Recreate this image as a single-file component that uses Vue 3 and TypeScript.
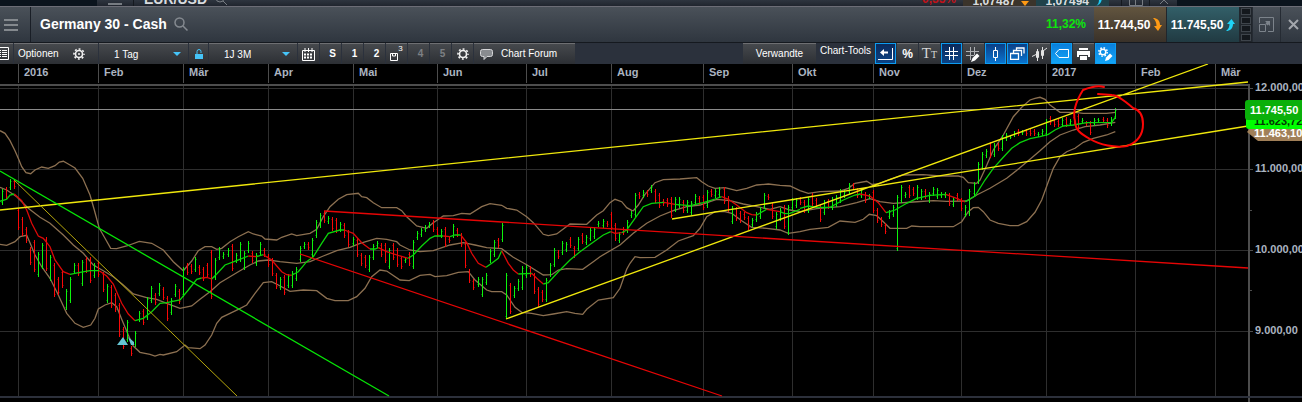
<script setup lang="ts">
import { ref } from 'vue'

/* Chart data is stored per tile: an origin in chart units and values in thirds of a unit. */
interface Tile {
  ox: number
  oy: number
  d: string
}
interface Bar {
  x: number
  top: number
  height: number
  up: boolean
}

const barTiles: Tile[] = [
  { ox: 0, oy: 160, d: 'g7 87 134,r19 82 118,g31 58 90,r43 58 88,r55 145 209,r67 172 228,r79 202 248,r91 262 316,r103 240 336,g115 276 352,g127 249 326,r139 231 332,g151 285 362,r163 310 412,r175 350 405,r187 330 385,g199 387 450,g211 352 430,g223 310 343,r235 308 348,g247 300 377,r259 290 340,r271 292 368,g283 309 355,r295 303 350,r310 335 396,g322 372 430,r334 375 445,r346 398 457,r358 430 532,r370 500 567,g382 481 545,r394 558 587,g406 513 562,g418 453 485,r430 448 495,g442 411 480,g454 378 430,r466 398 435,g478 369 408,r490 382 420,r502 408 483,g514 415 465,g526 373 412,r538 388 432,g550 322 410,r562 310 345,r574 312 342,g586 292 335,r598 315 345,r610 320 363,r622 308 350,r634 270 417' },
  { ox: 200, oy: 180, d: 'g46 235 300,g58 201 240,g70 215 237,g84 205 232,r97 193 272,g109 218 248,g121 187 245,g133 212 269,g145 183 220,r157 213 250,g169 220 258,g181 187 225,r193 205 230,r205 222 262,r217 235 288,r229 278 326,g241 292 329,r253 285 346,g265 283 325,g277 272 325,g289 260 303,g301 199 245,g313 185 207,r325 186 210,g337 175 230,g349 120 175,g361 98 145,r373 93 130,g385 107 132,r397 112 152,r409 115 160,g421 126 155,r433 128 175,r445 150 202,g460 172 198,r472 175 230,r484 218 258,r496 225 263,g508 225 275,g520 192 240,g532 183 205,r544 190 230,r556 190 250,g568 205 267,r580 190 240,r592 205 260' },
  { ox: 400, oy: 180, d: 'r4 228 267,g16 230 248,r28 215 258,g40 180 267,g52 153 180,g64 143 172,g76 135 155,g88 125 145,r100 120 155,r112 140 170,g124 147 175,r136 142 200,r148 170 190,g160 133 175,r172 145 170,r184 158 200,r196 185 265,r208 268 310,r220 298 330,g235 290 320,g247 290 350,g259 278 315,g271 208 248,g283 180 230,r295 173 205,g307 130 187,g319 278 418,r331 308 402,g343 317 355,g355 296 332,g367 258 330,g379 255 295,r391 258 290,r403 280 342,r415 322 380,r427 330 365,g439 295 365,g451 248 292,g463 205 260,r475 210 237,g487 182 225,g499 185 215,r511 170 205,r523 197 233,g535 172 212,r547 160 192,g559 165 195,g571 145 182,g583 140 177,g595 122 142,g610 118 145,r622 122 142,r634 97 150,r646 128 183,g658 155 190,r670 140 165,g682 120 160,g694 92 115' },
  { ox: 600, oy: 150, d: 'g106 128 200,r118 127 147,g130 120 145,r142 120 142,g154 105 128,r166 118 158,r178 130 175,r190 148 168,r202 145 172,r214 140 205,g226 142 185,g238 140 175,r250 150 190,g262 150 190,g274 152 195,g286 132 165,r298 138 165,r310 135 180,g322 120 175,r334 117 140,g346 118 145,g358 112 142,r373 112 162,r385 137 187,g397 167 222,r409 172 213,r421 182 218,r433 185 210,r445 197 240,g457 205 230,g469 187 215,g481 170 208,g493 128 178,r505 132 150,r517 160 207,g529 185 237,g541 175 212,r553 165 238,g565 165 255,g577 145 180,g589 145 175,r601 142 165,r613 150 190,g625 142 190,r637 130 168' },
  { ox: 780, oy: 120, d: 'r109 235 265,r121 253 305,g133 240 285,r145 238 268,g157 230 270,g169 225 260,g181 207 250,g193 210 235,g208 190 222,r220 188 210,r232 205 235,g244 203 235,r256 215 250,g268 222 238,r280 210 280,r292 265 310,r304 290 322,r316 310 342,g328 270 297,g340 255 290,g352 225 392,g364 195 250,g376 215 235,r388 195 235,r400 200 228,g412 195 240,g424 208 240,r436 207 237,g448 215 248,g460 200 228,g472 205 238,g484 215 233,g496 215 235,r508 220 258,g520 232 260,r532 220 242,r544 235 273,g556 255 292,g568 208 288' },
  { ox: 960, oy: 80, d: 'g43 305 348,g55 245 312,g67 217 271,g79 208 233,r91 187 233,g103 190 230,r115 190 214,g127 165 212,g139 158 182,g151 165 178,g163 153 172,r175 148 168,g187 150 165,r199 148 168,r211 148 167,r223 147 167,g235 155 170,g247 148 168,g259 117 167,r271 108 135,r283 118 140,r295 118 140,g307 115 140,r319 112 140,g331 118 138,r343 105 135,r355 103 150,g367 113 132,r379 122 138,r391 122 165,g403 113 138,g415 115 127,r430 110 130,r442 115 145,g454 112 138,g466 84 118' },
]

const bars: Bar[] = barTiles.flatMap((t) =>
  t.d.split(',').map((b) => {
    const [x, hi, lo] = b.slice(1).split(' ').map(Number)
    const top = Math.round(t.oy + hi / 3)
    const bottom = Math.round(t.oy + lo / 3)
    return { x: Math.floor(t.ox + x / 3), top, height: bottom - top, up: b[0] === 'g' }
  }),
)

function openY(b: Bar): number {
  return b.up ? b.top + b.height - 3 : b.top + 2
}
function closeY(b: Bar): number {
  return b.up ? b.top + 2 : b.top + b.height - 3
}

function toPoints(tiles: Tile[]): string {
  return tiles
    .flatMap((t) =>
      t.d.split(' ').map((p) => {
        const [x, y] = p.split(',').map(Number)
        return `${(t.ox + x / 3).toFixed(1)},${(t.oy + y / 3).toFixed(1)}`
      }),
    )
    .join(' ')
}

const bands: string[] = [
  toPoints([
    { ox: 0, oy: 160, d: '0,-88 15,-80 30,-58 45,-28 57,0 65,20 78,38 92,41 105,30 125,21 145,25 165,17 178,6 190,4 205,12 225,24 248,55 270,105 283,150 298,205 315,235 332,265 350,266 380,258 418,244 455,250 490,270 520,305 550,332 575,303 595,272' },
    { ox: 200, oy: 180, d: '15,200 35,200 50,208 65,205 90,185 115,170 145,155 160,162 185,168 195,177 230,180 245,172 275,162 290,167 330,160 350,148 370,110 390,80 415,58 440,44 475,40 485,50 500,53 520,68 545,83 590,83 605,92' },
    { ox: 400, oy: 180, d: '20,110 50,138 80,145 100,128 130,108 160,107 185,100 210,102 245,80 270,71 305,76 320,85 350,90 380,110 400,128 430,163 445,167 470,162 510,132 560,133 590,105 610,92 630,68 645,58 665,65 680,83 695,91' },
    { ox: 600, oy: 150, d: '100,182 115,165 135,133 165,98 190,89 240,87 290,83 305,95 325,108 345,115 375,113 410,122 440,115 470,105 505,102' },
    { ox: 780, oy: 120, d: '0,196 30,198 60,212 85,220 120,215 180,213 205,205 225,190 260,184 275,193 295,192 330,178 370,165 430,164 480,168 535,168 550,172 565,188 590,190 600,180 615,148 640,90 670,45' },
    { ox: 960, oy: 80, d: '160,110 185,82 210,60 225,55 240,52 255,58 270,75 300,97 345,97 370,100 440,100 466,97' },
  ]),
  toPoints([
    { ox: 0, oy: 160, d: '0,82 20,90 50,110 60,120 85,145 120,172 150,190 190,225 220,255 250,280 280,315 310,332 340,350 370,375 400,402 440,413 470,418 500,430 540,445 575,438' },
    { ox: 200, oy: 180, d: '0,358 30,335 60,308 90,290 120,272 150,255 175,243 205,240 240,245 290,250 330,245 370,228 410,212 450,202 480,190 530,175 560,178 590,185' },
    { ox: 400, oy: 180, d: '0,195 30,210 60,215 100,212 150,195 190,188 225,195 260,203 305,206 340,232 380,254 430,285 455,284 475,270 500,266 548,268 580,245' },
    { ox: 600, oy: 150, d: '0,320 60,285 100,250 140,220 180,198 220,182 260,170 300,165 330,155 350,148 390,152 430,162 470,170 510,178' },
    { ox: 780, oy: 120, d: '0,260 30,270 60,275 110,266 180,260 230,248 270,236 300,245 340,250 400,246 460,242 500,244 560,243 590,225 630,205 680,175' },
    { ox: 960, oy: 80, d: '178,265 210,238 240,212 270,185 300,165 340,150 375,140 420,135 466,127' },
  ]),
  toPoints([
    { ox: 0, oy: 160, d: '0,253 20,256 45,245 60,230 80,226 90,248 105,285 125,320 150,355 175,405 200,460 225,490 250,502 272,495 285,475 295,447 315,435 335,428 350,440 365,478 385,525 400,558 420,577 450,583 465,588 480,583 490,585 530,575 555,555 565,563' },
    { ox: 200, oy: 180, d: '0,506 15,495 35,465 50,430 65,412 90,400 115,388 140,375 165,340 190,308 215,305 235,315 270,334 310,330 350,332 380,355 405,362 445,362 470,350 495,325 515,290 540,270 560,273' },
    { ox: 400, oy: 180, d: '0,300 28,302 60,286 90,283 105,290 140,287 175,277 205,275 225,300 260,330 275,335 305,335 320,345 345,382 365,397 395,400 430,407 460,402 500,395 525,400 548,403 560,388 595,360 640,353 660,325' },
    { ox: 600, oy: 150, d: '80,358 90,340 105,320 120,323 165,322 200,300 235,273 280,257 300,235 320,200 345,185 375,185 395,190 425,212 455,232 500,235' },
    { ox: 780, oy: 120, d: '0,330 25,340 60,335 90,328 145,322 180,303 225,307 250,298 268,283 290,287 310,305 330,325 380,325 395,318 420,320 520,320 545,305 565,275 580,263 595,262 610,275 630,300' },
    { ox: 960, oy: 80, d: '115,430 150,437 175,437 200,425 225,397 245,360 265,305 280,265 300,230 320,215 345,205 370,187 400,175 440,165 466,155' },
  ]),
]

function avg(up: boolean, ox: number, oy: number, d: string) {
  return { up, points: toPoints([{ ox, oy, d }]) }
}

const average = [
  avg(true, 0, 160, '0,124 20,118 30,105 43,102'),
  avg(false, 0, 160, '43,102 65,122 80,150 95,190 115,228 130,235 150,260 165,300 190,335 210,343'),
  avg(true, 0, 160, '210,343 240,337 270,332 298,332'),
  avg(false, 0, 160, '298,332 320,348 340,372 365,430 385,462 405,482'),
  avg(true, 0, 160, '405,482 430,475 455,455 480,430 500,428 540,420 565,390 590,358 605,354'),
  avg(false, 0, 160, '605,354 620,352 635,357'),
  avg(true, 200, 180, '35,297 50,282 75,255 110,242 145,228'),
  avg(false, 200, 180, '145,228 170,230'),
  avg(true, 200, 180, '170,230 190,224'),
  avg(false, 200, 180, '190,224 215,240 245,275 260,284 275,286'),
  avg(true, 200, 180, '275,286 295,275 320,245 340,230 365,190 385,160 420,150 433,150'),
  avg(false, 200, 180, '433,150 460,160 485,188 510,207'),
  avg(true, 200, 180, '510,207 525,207 535,203'),
  avg(false, 200, 180, '535,203 560,215 600,228 625,235'),
  avg(true, 400, 180, '25,235 40,225 65,198 90,175 105,168 130,168'),
  avg(false, 400, 180, '130,168 150,170'),
  avg(true, 400, 180, '150,170 165,165 182,165'),
  avg(false, 400, 180, '182,165 200,188 215,220 235,250 258,262'),
  avg(true, 400, 180, '258,262 275,250 295,235 305,212'),
  avg(false, 400, 180, '305,212 325,250 340,270 355,282'),
  avg(true, 400, 180, '355,282 395,280'),
  avg(false, 400, 180, '395,280 410,295 430,312'),
  avg(true, 400, 180, '430,312 445,308 475,275 510,240 540,215 575,190 610,165 632,155'),
  avg(false, 400, 180, '632,155 645,160 665,158'),
  avg(true, 600, 150, '65,248 80,240 105,205 130,170 155,160 192,157'),
  avg(false, 600, 150, '192,157 225,163'),
  avg(true, 600, 150, '225,163 270,167 310,158 345,147 365,140'),
  avg(false, 600, 150, '365,140 385,148 410,165 440,188 455,194 470,195'),
  avg(true, 600, 150, '470,195 500,178'),
  avg(false, 600, 150, '500,178 540,185'),
  avg(true, 600, 150, '540,185 555,191 570,190 600,178'),
  avg(true, 780, 120, '60,265 85,258 110,262 150,262 190,240 225,225 240,222'),
  avg(false, 780, 120, '240,222 270,228 295,248 318,278'),
  avg(true, 780, 120, '318,278 345,270 380,250 410,235 450,226 497,223'),
  avg(false, 780, 120, '497,223 530,235 555,246'),
  avg(true, 960, 80, '15,365 45,348 75,300 100,265 130,232 155,205 180,188 210,176 240,170 265,163 285,150 310,138 340,135 380,128 455,127 466,112'),
]

const months = [
  { x: 18, label: '2016' },
  { x: 98, label: 'Feb' },
  { x: 183, label: 'Mär' },
  { x: 268, label: 'Apr' },
  { x: 353, label: 'Mai' },
  { x: 437, label: 'Jun' },
  { x: 526, label: 'Jul' },
  { x: 611, label: 'Aug' },
  { x: 703, label: 'Sep' },
  { x: 792, label: 'Okt' },
  { x: 873, label: 'Nov' },
  { x: 961, label: 'Dez' },
  { x: 1046, label: '2017' },
  { x: 1135, label: 'Feb' },
  { x: 1215, label: 'Mär' },
]

const prices = [
  { y: 88, label: '12.000,00' },
  { y: 169, label: '11.000,00' },
  { y: 250, label: '10.000,00' },
  { y: 331, label: '9.000,00' },
]

const interval = ref('1 Tag')
const range = ref('1J 3M')
</script>

<template>
  <div class="desktop">
    <div class="behind">
      <div class="behind-window">
        <span class="behind-menu"><i></i></span>
        <span class="behind-title">EUR/USD</span>
        <svg class="behind-search" width="12" height="12" viewBox="0 0 12 12"><circle cx="5" cy="4" r="4" /><path d="M8 7l4 4" /></svg>
        <span class="behind-change">-0,35%</span>
        <span class="behind-price sell">1,07487 <svg width="8" height="9" viewBox="0 0 8 9"><path d="M0 4h8L4 9z" fill="#ff9a14" /></svg></span>
        <span class="behind-price buy">1,07494 <svg width="8" height="9" viewBox="0 0 8 9"><path d="M1 9C5 8 5 5 5 0h3C8 5 6 8 1 9z" fill="#1fc9f2" /></svg></span>
        <span class="behind-depth"></span>
        <span class="behind-button"><svg width="14" height="10" viewBox="0 0 14 10"><path d="M.5 0v9.500h13V0M.5 3.500h6v6" /></svg></span>
        <span class="behind-button"><svg width="10" height="10" viewBox="0 0 10 10"><path d="M1 0l8 8M9 0L1 8" /></svg></span>
      </div>
    </div>

    <header class="titlebar">
      <button class="menu" aria-label="Menü"><i></i><i></i><i></i></button>
      <h1>Germany 30 - Cash</h1>
      <button class="search" aria-label="Suche">
        <svg width="15" height="15" viewBox="0 0 15 15"><circle cx="5.500" cy="5.500" r="4.500" /><path d="M9 9l4.500 4.500" /></svg>
      </button>
      <span class="change">11,32%</span>
      <button class="price sell">
        11.744,50
        <svg width="9" height="14" viewBox="0 0 9 14"><path d="M0 0c4 0 7 2.500 7 7h2L5 13 1 8h2.500C3.500 5 2.500 2 0 0z" fill="#ff9a14" /></svg>
      </button>
      <button class="price buy">
        11.745,50
        <svg width="9" height="14" viewBox="0 0 9 14"><path d="M0 13c4 0 7-2.500 7-7h2L5.500 1 1 6h2.500C3.500 9 2.500 11 0 13z" fill="#1fd3f7" /></svg>
      </button>
      <span class="depth"><i></i><i></i><i></i><i></i></span>
      <button class="window-button restore" aria-label="Wiederherstellen">
        <svg width="15" height="15" viewBox="0 0 15 15"><path d="M.5 6V.500h14v14H9M.500 7.500h6v7h-6z" fill="none" stroke="#7c838b" /><path d="M6 4h5v5L9.500 7.500 8.500 8.500 6.500 6.500l1-1z" fill="#7c838b" /></svg>
      </button>
      <button class="window-button close" aria-label="Schließen">
        <svg width="11" height="11" viewBox="0 0 11 11"><path d="M1 1l9 9M10 1l-9 9" stroke="#a3a7ac" stroke-width="2" /></svg>
      </button>
    </header>

    <div class="toolbar">
      <div class="group">
        <button class="tool list" aria-label="Liste">
          <svg width="11" height="14" viewBox="0 0 11 14"><path d="M0 .5h8.500v12H0" fill="none" stroke="#fff" /><path d="M0 3.500h1M0 5.500h1M0 7.500h1M0 9.500h1M2 3.500h5M2 5.500h5M2 7.500h5M2 9.500h5" stroke="#fff" /></svg>
        </button>
        <button class="tool options">
          Optionen
          <svg width="12" height="12" viewBox="0 0 12 12"><circle cx="6" cy="6" r="3.500" fill="none" stroke="#f2f2f2" stroke-width="1.600" /><circle cx="6" cy="6" r="5" fill="none" stroke="#f2f2f2" stroke-width="1.600" stroke-dasharray="1.900 2.030" stroke-dashoffset="1" /><circle cx="6" cy="6" r="1" fill="#f2f2f2" /></svg>
        </button>
        <span class="tool choice interval">
          <select v-model="interval" aria-label="Intervall"><option>1 Tag</option><option>1 Woche</option></select>
          <svg width="8" height="4" viewBox="0 0 8 4"><path d="M0 0h8L4 4z" fill="#45c4f8" /></svg>
        </span>
        <button class="tool lock" aria-label="Sperren">
          <svg width="8" height="10" viewBox="0 0 8 10"><path d="M2 5V2.500a2 2 0 0 1 4 0V4" fill="none" stroke="#45c4f8" /><path d="M0 5h8v5H0z" fill="#45c4f8" /></svg>
        </button>
        <span class="tool choice range">
          <select v-model="range" aria-label="Zeitraum"><option>1J 3M</option><option>6M</option></select>
          <svg width="8" height="4" viewBox="0 0 8 4"><path d="M0 0h8L4 4z" fill="#45c4f8" /></svg>
        </span>
        <button class="tool" aria-label="Kalender">
          <svg width="13" height="13" viewBox="0 0 13 13"><path d="M.5 2.500h12v10H.500z" fill="none" stroke="#fff" /><path d="M3 0v4M6.500 0v4M10 0v4" stroke="#fff" /><path d="M2 6.500h9M2 9.500h9" stroke="#fff" stroke-width="2" stroke-dasharray="2 1" /></svg>
        </button>
        <button class="tool slot">S</button>
        <button class="tool slot">1</button>
        <button class="tool slot">2</button>
        <button class="tool save" aria-label="Speichern 3">
          <svg width="8" height="8" viewBox="0 0 8 8"><path d="M.5.500h7v7h-7zM2.500.500v2.500h3V.500" fill="none" stroke="#fff" /></svg>
          <sup>3</sup>
        </button>
        <button class="tool slot dim">4</button>
        <button class="tool slot dim">5</button>
        <button class="tool" aria-label="Einstellungen">
          <svg width="12" height="12" viewBox="0 0 12 12"><circle cx="6" cy="6" r="3.500" fill="none" stroke="#f2f2f2" stroke-width="1.600" /><circle cx="6" cy="6" r="5" fill="none" stroke="#f2f2f2" stroke-width="1.600" stroke-dasharray="1.900 2.030" stroke-dashoffset="1" /></svg>
        </button>
        <button class="tool forum">
          <svg width="13" height="11" viewBox="0 0 13 11"><path d="M2.500.500h8q2 0 2 2v3q0 2-2 2H7L4 10.500V7.500H2.500q-2 0-2-2v-3q0-2 2-2z" fill="#888b8f" stroke="#d5d6d8" /></svg>
          Chart Forum
        </button>
      </div>
      <div class="group">
        <button class="tool related">Verwandte</button>
        <span class="caption">Chart-Tools</span>
        <button class="tool on" aria-label="Zurück">
          <svg width="15" height="14" viewBox="0 0 15 14"><path d="M14.500 1v11.500H0" fill="none" stroke="#fff" /><path d="M2 5.500L6 2v2.500h4v2H6V9z" fill="#fff" /></svg>
        </button>
        <button class="tool percent">%</button>
        <button class="tool text" aria-label="Text"><b>T</b><small>T</small></button>
        <button class="tool on" aria-label="Raster">
          <svg width="13" height="13" viewBox="0 0 13 13"><path d="M4.500 0v13M8.500 0v13M0 4.500h13M0 8.500h13" stroke="#fff" /></svg>
        </button>
        <button class="tool" aria-label="Raster bearbeiten">
          <svg width="15" height="15" viewBox="0 0 15 15"><path d="M4.500 0v13M8.500 0v8M0 4.500h13M0 8.500h8" stroke="#aeb0b3" /><path d="M5 15l1.500-4L11 6.500l2.500 2.500L9 13.500z" fill="#fff" /></svg>
        </button>
        <button class="tool on bright" aria-label="Kerze">
          <svg width="7" height="14" viewBox="0 0 7 14"><path d="M1.500 3.500h4v7h-4zM3.500 0v3.500M3.500 10.500V14" fill="none" stroke="#fff" /></svg>
        </button>
        <button class="tool on bright" aria-label="Fenster">
          <svg width="15" height="13" viewBox="0 0 15 13"><path d="M.5 6.500h8v6h-8zM3.500 6V3.500h8V9M6.500 3V1H14v5.500" fill="none" stroke="#fff" stroke-width="1.300" /></svg>
        </button>
        <button class="tool" aria-label="Indikatoren">
          <svg width="15" height="14" viewBox="0 0 15 14"><path d="M4.500 4.500h2v6h-2zM5.500 2v12M9.500 3.500h2v5h-2zM10.500 0v12M0 9.500l4-2M11 4l4-3" fill="none" stroke="#e4e4e4" /></svg>
        </button>
        <button class="tool on cyan" aria-label="Etikett">
          <svg width="14" height="9" viewBox="0 0 14 9"><path d="M4 .5h9.500v8H4L.500 4.500z" fill="none" stroke="#fff" /></svg>
        </button>
        <button class="tool" aria-label="Drucken">
          <svg width="13" height="12" viewBox="0 0 13 12"><path d="M2 0h9v2H2zM0 3h13v6h-2V7H2v2H0zM3 8h7v4H3z" fill="#fff" /></svg>
        </button>
        <button class="tool on cyan" aria-label="Werkzeuge">
          <svg width="15" height="14" viewBox="0 0 15 14"><circle cx="5" cy="5" r="2.800" fill="none" stroke="#fff" stroke-width="1.500" /><circle cx="5" cy="5" r="4.200" fill="none" stroke="#fff" stroke-width="1.500" stroke-dasharray="1.600 1.700" /><path d="M7 14l1-3.500L12 6.500l2.500 2.500-4 4z" fill="#fff" /></svg>
        </button>
      </div>
    </div>

    <svg class="chart" viewBox="0 64 1302 338" role="img" aria-label="Germany 30 - Cash">
      <g class="grid">
        <rect v-for="p in prices" :key="p.y" x="0" :y="p.y" width="1248" height="1" />
        <rect v-for="m in months" :key="m.x" :x="m.x" y="86" width="1" height="310" />
      </g>
      <g class="frame">
        <rect v-for="m in months" :key="m.x" :x="m.x" y="64" width="1" height="19" />
        <rect x="0" y="84" width="1250" height="2" />
        <rect x="1248" y="84" width="2" height="318" />
        <rect v-for="p in prices" :key="p.y" x="1250" :y="p.y" width="3" height="1" />
        <rect x="1250" y="129" width="2" height="1" />
        <rect x="1250" y="210" width="2" height="1" />
        <rect x="1250" y="290" width="2" height="1" />
      </g>
      <rect class="floor" x="0" y="396" width="1302" height="2" />
      <g class="labels">
        <text v-for="m in months" :key="m.x" :x="m.x + 6" y="76">{{ m.label }}</text>
        <text v-for="p in prices" :key="p.y" x="1255" :y="p.y + 3">{{ p.label }}</text>
      </g>

      <polyline v-for="(b, i) in bands" :key="i" class="band" :points="b" />
      <g v-for="(b, i) in bars" :key="i" :class="b.up ? 'bar-up' : 'bar-down'">
        <rect :x="b.x" :y="b.top" width="1" :height="b.height" />
        <rect class="tick" :x="b.x - 1" :y="openY(b)" width="1" height="1" />
        <rect class="tick" :x="b.x + 1" :y="closeY(b)" width="1" height="1" />
      </g>
      <polyline v-for="(a, i) in average" :key="i" :class="a.up ? 'avg-up' : 'avg-down'" :points="a.points" />

      <g class="trends">
        <path class="current" d="M0 109.500H1248" />
        <path class="yellow" d="M0 210L1248 82M506 319L1208 64M672 219L1248 126" />
        <path class="yellow thin" d="M14 180L237 396" />
        <path class="green" d="M0 171L389 396" />
        <path class="red" d="M324 211L1248 268M300 254L722 396" />
      </g>
      <g fill="#66c4d2">
        <path d="M117 345l6-8 5 8z" />
        <path d="M128 337l6 5v3h-3z" />
      </g>
      <path class="scribble" d="M1104 87C1098 85 1088 88 1083 90C1078 98 1072 110 1075 121C1075 130 1081 134 1090 139C1100 145 1115 148 1127 146C1138 142 1143 135 1143 124C1143 116 1140 110 1133 108C1125 101 1117 95 1112 95L1098 94" />

      <path d="M1247 132l8-10h47v19h-44z" fill="#a07f58" />
      <text class="tag" x="1254" y="137">11.463,10</text>
      <rect x="1246" y="110" width="60" height="19" rx="3" fill="#0f0" />
      <text class="tag dark" x="1254" y="125">11.623,72</text>
      <rect x="1245" y="100" width="60" height="20" rx="3" fill="#0ab00a" />
      <text class="tag" x="1250" y="114">11.745,50</text>
    </svg>
  </div>
</template>

<style>
body {
  margin: 0;
  background: #000;
}
</style>

<style scoped>
.desktop {
  overflow: hidden;
  background: #000;
  font-family: "Liberation Sans", Arial, sans-serif;
  color: #fff;
}
button,
select {
  margin: 0;
  padding: 0;
  border: 0;
  background: none;
  color: inherit;
  font-family: inherit;
}
svg {
  flex: none;
  display: block;
}

.behind {
  display: flex;
  height: 6px;
  padding: 0 125px 0 97px;
  overflow: hidden;
  background: #0b141d;
}
.behind-window {
  flex: 1;
  display: flex;
  align-items: flex-end;
  height: 6px;
  background: linear-gradient(#2e353f, #20252e);
  font-size: 12px;
  font-weight: bold;
  line-height: 10px;
  color: #d9dcdf;
}
.behind-menu {
  display: flex;
  align-items: flex-start;
  justify-content: center;
  box-sizing: border-box;
  width: 37px;
  height: 6px;
  padding-top: 3px;
  border-right: 1px solid #15191f;
}
.behind-menu i {
  width: 14px;
  height: 2px;
  background: #777c82;
}
.behind-title {
  margin-left: 10px;
  font-size: 14px;
  line-height: 14px;
}
.behind-search {
  margin-left: 8px;
  fill: none;
  stroke: #777c82;
}
.behind-change {
  margin-left: auto;
  padding-right: 7px;
  line-height: 14px;
  color: #c01218;
}
.behind-price {
  display: flex;
  align-items: flex-end;
  justify-content: flex-end;
  gap: 5px;
  box-sizing: border-box;
  width: 73px;
  height: 6px;
  padding-right: 7px;
}
.behind-price.sell {
  background: #3b342b;
}
.behind-price.buy {
  background: #20424a;
}
.behind-depth {
  width: 12px;
}
.behind-button {
  display: flex;
  align-items: flex-end;
  justify-content: center;
  width: 27px;
  height: 6px;
  border-left: 1px solid #15191f;
}
.behind-button svg {
  fill: none;
  stroke: #777c82;
}

.titlebar {
  display: flex;
  align-items: stretch;
  height: 35px;
  border-top: 1px solid #6c6d76;
  background: linear-gradient(#4a5159, #2f363f);
}
.menu {
  display: flex;
  flex-direction: column;
  justify-content: center;
  gap: 3px;
  box-sizing: border-box;
  width: 31px;
  padding-left: 4px;
  border-right: 1px solid #191e26;
}
.menu i {
  width: 14px;
  height: 2px;
  background: #84898e;
}
h1 {
  margin: 0 0 0 9px;
  font-size: 14px;
  line-height: 34px;
}
.search {
  margin-left: 7px;
}
.search svg {
  fill: none;
  stroke: #858a90;
  stroke-width: 1.5;
}
.change {
  margin-left: auto;
  padding-right: 8px;
  font-size: 12px;
  font-weight: bold;
  line-height: 35px;
  color: #0de50d;
}
.price {
  display: flex;
  align-items: center;
  justify-content: center;
  gap: 3px;
  box-sizing: border-box;
  width: 73px;
  border-right: 1px solid #20262d;
  font-size: 12px;
  font-weight: bold;
}
.price.sell {
  background: linear-gradient(#62553f, #393129);
}
.price.buy {
  background: linear-gradient(#325f68, #213a42);
}
.depth {
  display: flex;
  flex-direction: column;
  justify-content: space-around;
  align-items: center;
  width: 12px;
  background: #20252b;
}
.depth i {
  width: 10px;
  height: 7px;
  border: 1px solid #3e444b;
  box-sizing: border-box;
  background: #14181d;
}
.window-button {
  display: flex;
  align-items: center;
  justify-content: center;
  box-sizing: border-box;
  border-left: 1px solid #252b33;
}
.restore {
  width: 28px;
}
.close {
  width: 22px;
  padding-left: 4px;
}

.toolbar {
  display: flex;
  justify-content: space-between;
  height: 21px;
  padding-right: 186px;
  border-top: 1px solid #15191f;
  background: #2b313c;
}
.group {
  display: flex;
  gap: 1px;
}
.tool {
  display: flex;
  align-items: center;
  justify-content: center;
  box-sizing: border-box;
  width: 21px;
  height: 21px;
  border-top: 1px solid #6e6f72;
  background: linear-gradient(#46494d, #2c2f34);
  font-size: 10px;
  line-height: 12px;
  white-space: nowrap;
}
.list {
  width: 13px;
  justify-content: flex-start;
}
.options {
  justify-content: space-between;
  width: 84px;
  padding: 0 13px 0 4px;
}
.choice {
  justify-content: space-between;
  padding: 0 7px 0 15px;
}
.choice select {
  appearance: none;
  font-size: 10px;
}
.choice option {
  background: #2c2f34;
}
.interval {
  width: 89px;
}
.lock {
  width: 19px;
}
.range {
  width: 88px;
}
.slot {
  padding-left: 4px;
  font-weight: bold;
}
.dim {
  color: #7d8084;
}
.save {
  align-items: flex-end;
  padding-bottom: 3px;
}
.save sup {
  align-self: flex-start;
  font-size: 8px;
  line-height: 9px;
}
.forum {
  justify-content: flex-start;
  gap: 8px;
  width: 101px;
  padding-left: 6px;
}
.related {
  width: 73px;
}
.caption {
  width: 57px;
  font-size: 10px;
  line-height: 16px;
  text-align: center;
}
.percent {
  font-size: 12px;
  font-weight: bold;
}
.text {
  align-items: baseline;
  font-family: "Liberation Serif", "Times New Roman", serif;
  color: #d8d8d8;
}
.text b {
  font-size: 15px;
  font-weight: normal;
  line-height: 19px;
}
.text small {
  font-size: 10px;
}
.on {
  border: 1px solid #0d9cf0;
  background: linear-gradient(#0c2a5c, #0b4385);
}
.on.bright {
  background: linear-gradient(#0b3f86, #0a74cf);
}
.on.cyan {
  background: linear-gradient(#0a7fdc, #12a4f6);
}

.chart {
  width: 100%;
  height: auto;
  font-size: 11px;
  font-weight: bold;
}
.grid {
  fill: #2e2e2e;
}
.frame {
  fill: #4d4d4d;
}
.floor {
  fill: #2c303b;
}
.labels {
  fill: #abb4c0;
}
.band {
  fill: none;
  stroke: #8c7051;
  stroke-width: 1.3;
}
.bar-up {
  fill: #0cf40c;
}
.bar-down {
  fill: #fa0808;
}
.tick {
  opacity: 0.35;
}
.avg-up,
.avg-down {
  fill: none;
  stroke: #0ad20a;
  stroke-width: 1.3;
}
.avg-down {
  stroke: #dc0808;
}
.trends {
  fill: none;
  stroke-width: 1.3;
}
.current {
  stroke: #8a8a8a;
  stroke-width: 1;
}
.yellow {
  stroke: #f0e80c;
}
.thin {
  stroke: #b5a60c;
  stroke-width: 1;
}
.green {
  stroke: #06e606;
}
.red {
  stroke: #e60505;
}
.scribble {
  fill: none;
  stroke: #fb0606;
  stroke-width: 2;
  stroke-linecap: round;
}
.tag {
  fill: #fff;
}
.tag.dark {
  fill: #033803;
}
</style>
